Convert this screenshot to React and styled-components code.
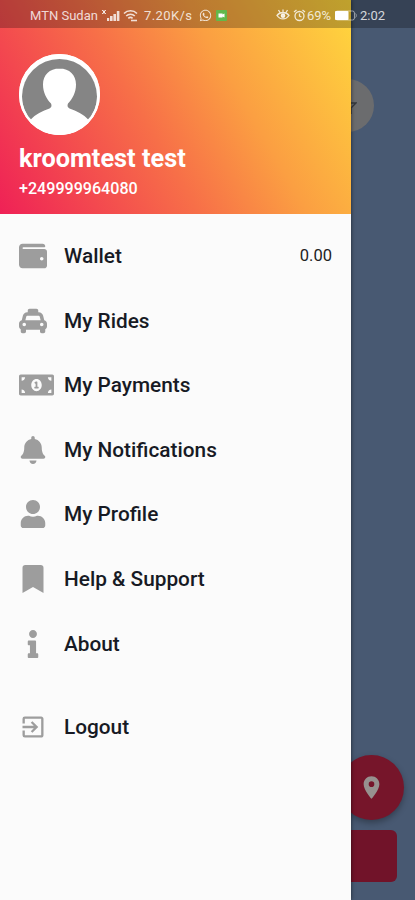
import React from "react";
import styled, { createGlobalStyle } from "styled-components";
import {
  FaWallet,
  FaTaxi,
  FaMoneyBillAlt,
  FaBell,
  FaUser,
  FaBookmark,
  FaInfo,
  FaWhatsapp,
} from "react-icons/fa";
import { MdExitToApp, MdPlace } from "react-icons/md";

const GlobalStyle = createGlobalStyle`
  * {
    box-sizing: border-box;
  }

  body {
    margin: 0;
    font-family: Roboto, "Liberation Sans", sans-serif;
  }
`;

const Screen = styled.div`
  position: relative;
  width: 415px;
  height: 900px;
  overflow: hidden;
  display: flex;
  background-color: #485972;
`;

const Drawer = styled.aside`
  position: relative;
  z-index: 1;
  width: 351px;
  height: 100%;
  background-color: #fbfbfb;
  box-shadow: 0 0 4px rgba(0, 0, 0, 0.6);
`;

const Header = styled.header`
  height: 214px;
  padding: 54px 19px 0;
  color: #fff;
  background: linear-gradient(60deg, #ef2156 0%, #f76f48 42%, #fb9f42 65%, #ffd83d 100%);
`;

const Avatar = styled.svg`
  display: block;
  width: 81px;
  height: 81px;
`;

const UserName = styled.h1`
  margin: 9px 0 0;
  font-size: 25.3px;
  line-height: 30px;
  font-weight: 700;
`;

const Phone = styled.p`
  margin: 5px 0 0;
  font-size: 16.1px;
  line-height: 20px;
  font-weight: 500;
`;

const Menu = styled.nav`
  padding-top: 9.7px;
`;

const MenuItem = styled.a`
  display: flex;
  align-items: center;
  height: 64.6px;
  padding: 0 19px;
  margin-top: ${(props) => (props.$spaced ? "18.4px" : "0")};
`;

const IconSlot = styled.span`
  flex: 0 0 45px;
  display: flex;
`;

const IconBox = styled.span`
  flex: 0 0 ${(props) => (props.$wide ? "35px" : "28px")};
  color: #9d9d9d;

  svg {
    display: block;
    width: 100%;
    height: 28px;
  }
`;

const Label = styled.span`
  flex: 1;
  font-size: 20.8px;
  line-height: 24px;
  font-weight: 500;
  color: #171a24;
`;

const Amount = styled.span`
  font-size: 16.5px;
  color: #222;
`;

const StatusBar = styled.div`
  position: absolute;
  z-index: 2;
  top: 0;
  left: 0;
  display: flex;
  align-items: center;
  width: 100%;
  height: 28px;
  padding: 2px 0 0 30px;
  background-color: rgba(0, 0, 0, 0.25);
  color: rgba(255, 255, 255, 0.8);
  font-size: 13px;
`;

const StatusItem = styled.span`
  flex: 0 0 ${(props) => props.$width}px;
  display: flex;
  align-items: center;
  white-space: nowrap;
  letter-spacing: ${(props) => props.$spacing || "0"};
`;

const MapButton = styled.div`
  position: absolute;
  top: 79px;
  left: 321px;
  display: flex;
  align-items: center;
  justify-content: center;
  width: 53px;
  height: 53px;
  border-radius: 50%;
  background-color: #6b6c6e;
  color: #35383d;
`;

const LocateButton = styled.div`
  position: absolute;
  top: 755px;
  left: 338.5px;
  display: flex;
  align-items: center;
  justify-content: center;
  width: 65px;
  height: 65px;
  border-radius: 50%;
  background-color: #76152a;
  box-shadow: 0 3px 6px rgba(0, 0, 0, 0.3);
  color: #97918f;
`;

const ActionButton = styled.div`
  position: absolute;
  top: 830px;
  left: 18px;
  width: 379px;
  height: 52px;
  border-radius: 6px;
  background-color: #711329;
`;

const items = [
  { label: "Wallet", icon: FaWallet, amount: "0.00" },
  { label: "My Rides", icon: FaTaxi },
  { label: "My Payments", icon: FaMoneyBillAlt, wide: true },
  { label: "My Notifications", icon: FaBell },
  { label: "My Profile", icon: FaUser },
  { label: "Help & Support", icon: FaBookmark },
  { label: "About", icon: FaInfo },
  { label: "Logout", icon: MdExitToApp, spaced: true },
];

const SignalIcon = () => (
  <svg width="20" height="13" viewBox="0 0 20 13" fill="currentColor">
    <path d="M1 1l4 4M5 1L1 5M3 1v4" stroke="currentColor" strokeWidth="1" />
    <rect x="6" y="9" width="2.2" height="3" />
    <rect x="9" y="7" width="2.6" height="5" />
    <rect x="12.4" y="5" width="2.6" height="7" />
    <rect x="15.8" y="2" width="2.6" height="10" />
  </svg>
);

const WifiIcon = () => (
  <svg width="15" height="13" viewBox="0 0 15 13" fill="none" stroke="currentColor" strokeWidth="1.6">
    <path d="M1 4.5c3.5-3.6 9.5-3.6 13 0M3.2 7c2.4-2.4 6.2-2.4 8.6 0M5.3 9.3c1.3-1.2 3-1.2 4.3 0" />
    <path d="M8 11.5h6" />
  </svg>
);

const EyeIcon = () => (
  <svg width="14" height="12" viewBox="0 0 14 12" fill="none" stroke="currentColor" strokeWidth="1.3">
    <path d="M1 6.500c3-4 9-4 12 0-3 4.500-9 4.500-12 0zM2.500 1l1.500 2.500M7 .5v2.500M11.500 1L10 3.500" />
    <circle cx="7" cy="6.700" r="1.700" fill="currentColor" />
  </svg>
);

const AlarmIcon = () => (
  <svg width="13" height="13" viewBox="0 0 13 13" fill="none" stroke="currentColor" strokeWidth="1.3">
    <circle cx="6.500" cy="7" r="4.500" />
    <path d="M6.500 4.500V7l2 1M1 3l2.500-2M12 3L9.500 1" />
  </svg>
);

const BatteryIcon = () => (
  <svg width="22" height="11" viewBox="0 0 22 11">
    <rect x=".5" y="1" width="19" height="9" rx="2" fill="none" stroke="currentColor" strokeOpacity=".6" />
    <rect x="0" y="1" width="13.500" height="9" rx="1" fill="#fff" />
    <path d="M20.500 3.500c1 .8 1 3.200 0 4" fill="none" stroke="currentColor" strokeOpacity=".6" />
  </svg>
);

const GreenBadge = () => (
  <svg width="11" height="11" viewBox="0 0 11 11">
    <rect width="11" height="11" rx="1" fill="#62b84b" />
    <path d="M2.500 3.500h4v1l2-1v4l-2-1v1h-4z" fill="#fff" />
  </svg>
);

const App = () => (
  <>
    <GlobalStyle />
    <Screen>
      <MapButton>
        <svg width="18" height="18" viewBox="0 0 18 18" fill="none" stroke="currentColor" strokeWidth="1.4">
          <path d="M2 6h15l-5 5v6" />
        </svg>
      </MapButton>
      <LocateButton>
        <MdPlace size={27} />
      </LocateButton>
      <ActionButton />

      <Drawer>
        <Header>
          <Avatar viewBox="0 0 81 81">
            <circle cx="40.500" cy="40.500" r="40.500" fill="#fff" />
            <circle cx="40.500" cy="42.500" r="37.500" fill="#858585" />
            <path
              d="M40.500 14.500c-10 0-16.500 6.500-16.500 16 0 8 3.500 14.500 8 19 1 2 .5 4-1.500 5-7 2.500-14 5.500-19.200 11.500A38 38 0 0 0 40.500 81a38 38 0 0 0 29.200-15c-5.200-6-12.200-9-19.200-11.500-2-1-2.500-3-1.500-5 4.500-4.500 8-11 8-19 0-9.500-6.500-16-16.500-16z"
              fill="#fff"
            />
            <circle cx="40.500" cy="40.500" r="39.250" fill="none" stroke="#fff" strokeWidth="2.500" />
          </Avatar>
          <UserName>kroomtest test</UserName>
          <Phone>+249999964080</Phone>
        </Header>

        <Menu>
          {items.map(({ label, icon: Icon, amount, wide, spaced }) => (
            <MenuItem key={label} $spaced={spaced}>
              <IconSlot>
                <IconBox $wide={wide}>
                  <Icon />
                </IconBox>
              </IconSlot>
              <Label>{label}</Label>
              {amount && <Amount>{amount}</Amount>}
            </MenuItem>
          ))}
        </Menu>
      </Drawer>

      <StatusBar>
        <StatusItem $width={71}>MTN Sudan</StatusItem>
        <StatusItem $width={22}><SignalIcon /></StatusItem>
        <StatusItem $width={21}><WifiIcon /></StatusItem>
        <StatusItem $width={55} $spacing="0.4px">7.20K/s</StatusItem>
        <StatusItem $width={17}><FaWhatsapp size={13} /></StatusItem>
        <StatusItem $width={60}><GreenBadge /></StatusItem>
        <StatusItem $width={17}><EyeIcon /></StatusItem>
        <StatusItem $width={14}><AlarmIcon /></StatusItem>
        <StatusItem $width={28}>69%</StatusItem>
        <StatusItem $width={25}><BatteryIcon /></StatusItem>
        <StatusItem $width={30}>2:02</StatusItem>
      </StatusBar>
    </Screen>
  </>
);

export default App;
